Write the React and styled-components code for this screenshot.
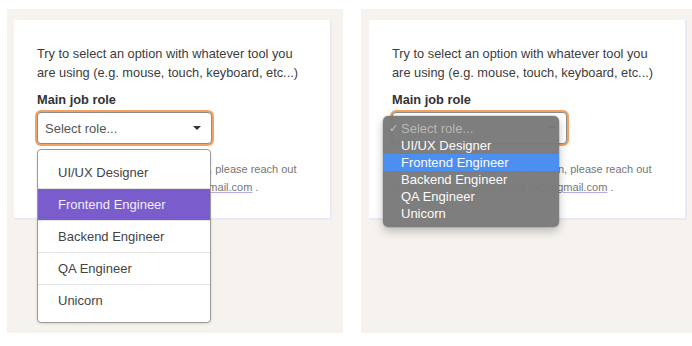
import styled, { createGlobalStyle } from 'styled-components'

const GlobalStyle = createGlobalStyle`
  body {
    margin: 0;
    background: #ffffff;
    font-family: "Liberation Sans", Arial, Helvetica, sans-serif;
  }
`

const roles = ['UI/UX Designer', 'Frontend Engineer', 'Backend Engineer', 'QA Engineer', 'Unicorn']

const Page = styled.div`
  display: flex;
  gap: 18px;
  padding: 9px 0 0 7px;
  width: 692px;
  height: 346px;
  box-sizing: border-box;
  overflow: hidden;
`

const Stage = styled.div`
  width: ${({ $width }) => $width}px;
  height: 324px;
  flex-shrink: 0;
  background: #f6f3ef;
  padding: 11px 0 0 ${({ $inset }) => $inset}px;
  box-sizing: border-box;
`

const Card = styled.div`
  width: 318px;
  height: 200px;
  box-sizing: border-box;
  background: #ffffff;
  border-right: 2px solid #ece8f6;
  border-bottom: 2px solid #ece8f6;
  padding: 24px 12px 0 23px;
  color: #3c3c3c;
  font-size: 12.8px;
  line-height: 19px;
  white-space: nowrap;
`

const Intro = styled.p`
  margin: 0;
`

const Label = styled.div`
  margin-top: 8px;
  font-weight: bold;
  color: #333333;
`

const Field = styled.div`
  position: relative;
  width: 175px;
  margin-top: 3px;
  font-size: 13px;
`

const SelectBox = styled.div`
  height: 32px;
  box-sizing: border-box;
  border: 1px solid #8c8c8c;
  border-radius: 4px;
  box-shadow: 0 0 0 2px #f3a262;
  display: flex;
  align-items: center;
  justify-content: space-between;
  padding: 0 8px 0 7px;
  color: #555555;
  background: #ffffff;
`

const Caret = styled.span`
  width: 0;
  height: 0;
  border-left: 4px solid transparent;
  border-right: 4px solid transparent;
  border-top: 4px solid #333333;
  margin-right: 2px;
`

const Note = styled.p`
  margin: 16px 0 0;
  font-size: 11px;
  line-height: 18px;
  color: #767676;
`

const Mail = styled.span`
  text-decoration: underline;
  text-decoration-color: #b9a9e6;
`

const List = styled.ul`
  position: absolute;
  top: 37px;
  left: 0;
  width: 174px;
  margin: 0;
  padding: 6px 0;
  list-style: none;
  box-sizing: border-box;
  background: #ffffff;
  border: 1px solid #9a9a9a;
  border-radius: 4px;
  box-shadow: 0 1px 3px rgba(0, 0, 0, 0.12);
`

const Option = styled.li`
  height: 32px;
  display: flex;
  align-items: center;
  padding-left: 20px;
  box-sizing: border-box;
  color: ${({ $active }) => ($active ? '#f1edfb' : '#444444')};
  background: ${({ $active }) => ($active ? '#7b5ccc' : 'transparent')};
  border-top: 1px solid ${({ $first }) => ($first ? 'transparent' : '#e4e4e4')};
`

const Menu = styled.ul`
  position: absolute;
  top: 4px;
  left: -9px;
  width: 176px;
  margin: 0;
  padding: 4px 0 5px;
  list-style: none;
  box-sizing: border-box;
  background: rgba(122, 122, 122, 0.97);
  border-radius: 5px;
  box-shadow: 0 4px 10px rgba(0, 0, 0, 0.25), 0 0 0 0.5px rgba(0, 0, 0, 0.2);
  font-size: 13px;
`

const MenuItem = styled.li`
  position: relative;
  height: 17px;
  line-height: 17px;
  padding-left: 18px;
  color: ${({ $muted }) => ($muted ? '#b9b9b9' : '#fbfbfb')};
  background: ${({ $active }) => ($active ? '#4b8ff1' : 'transparent')};
`

const Check = styled.span`
  position: absolute;
  left: 6px;
  top: 0;
  font-size: 11px;
  color: #c4c4c4;
`

function Panel({ width, inset, children }) {
  return (
    <Stage $width={width} $inset={inset}>
      <Card>
        <Intro>
          Try to select an option with whatever tool you
          <br />
          are using (e.g. mouse, touch, keyboard, etc...)
        </Intro>
        <Label>Main job role</Label>
        <Field>
          <SelectBox>
            Select role...
            <Caret />
          </SelectBox>
          {children}
        </Field>
        <Note>
          If you've found a bug in this version, please reach out
          <br />
          to me directly at <Mail>hello.world.uxd@gmail.com</Mail> .
        </Note>
      </Card>
    </Stage>
  )
}

export default function App() {
  return (
    <>
      <GlobalStyle />
      <Page>
        <Panel width={336} inset={7}>
          <List>
            {roles.map((role, i) => (
              <Option key={role} $first={i === 0} $active={i === 1}>
                {role}
              </Option>
            ))}
          </List>
        </Panel>
        <Panel width={331} inset={8}>
          <Menu>
            <MenuItem $muted>
              <Check>✓</Check>
              Select role...
            </MenuItem>
            {roles.map((role, i) => (
              <MenuItem key={role} $active={i === 1}>
                {role}
              </MenuItem>
            ))}
          </Menu>
        </Panel>
      </Page>
    </>
  )
}
